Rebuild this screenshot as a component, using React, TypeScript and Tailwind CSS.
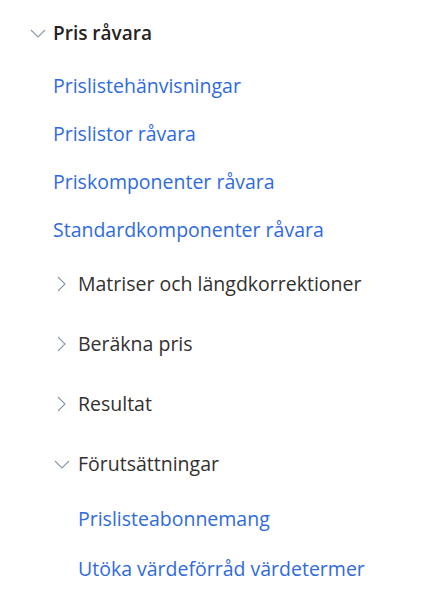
import React from "react";

const font = { fontFamily: '"Open Sans", "Noto Sans", sans-serif' };

function ChevronDown() {
  return (
    <svg width="16" height="9" viewBox="0 0 16 9" className="shrink-0">
      <path d="M1 1 L8 8 L15 1" fill="none" stroke="#8a97a8" strokeWidth="1.1" />
    </svg>
  );
}

function ChevronRight() {
  return (
    <svg width="9" height="16" viewBox="0 0 9 16" className="shrink-0">
      <path d="M1 1 L8 8 L1 15" fill="none" stroke="#8a97a8" strokeWidth="1.1" />
    </svg>
  );
}

export default function App() {
  return (
    <div className="h-[607px] w-[431px] bg-white pt-[13px]" style={font}>
      <div className="flex h-10 items-center pl-[30px]">
        <ChevronDown />
        <span className="ml-[7px] text-[19px] font-semibold leading-none text-[#252423]">Pris råvara</span>
      </div>
      <div className="pt-[9px]">
        <div className="flex h-12 items-center pl-[53px]">
          <span className="text-[19.5px] leading-none text-[#2f6bdc]">Prislistehänvisningar</span>
        </div>
        <div className="flex h-12 items-center pl-[53px]">
          <span className="text-[19.5px] leading-none text-[#2f6bdc]">Prislistor råvara</span>
        </div>
        <div className="flex h-12 items-center pl-[53px]">
          <span className="text-[19.5px] leading-none text-[#2f6bdc]">Priskomponenter råvara</span>
        </div>
        <div className="flex h-12 items-center pl-[53px]">
          <span className="text-[19.5px] leading-none text-[#2f6bdc]">Standardkomponenter råvara</span>
        </div>
      </div>
      <div className="flex h-[60px] items-center pl-[57px]">
        <ChevronRight />
        <span className="ml-[12px] text-[19.5px] leading-none text-[#323130]">Matriser och längdkorrektioner</span>
      </div>
      <div className="flex h-[60px] items-center pl-[57px]">
        <ChevronRight />
        <span className="ml-[12px] text-[19.5px] leading-none text-[#323130]">Beräkna pris</span>
      </div>
      <div className="flex h-[60px] items-center pl-[57px]">
        <ChevronRight />
        <span className="ml-[12px] text-[19.5px] leading-none text-[#323130]">Resultat</span>
      </div>
      <div className="flex h-[60px] items-center pl-[54px]">
        <ChevronDown />
        <span className="ml-[8px] text-[19.5px] leading-none text-[#323130]">Förutsättningar</span>
      </div>
      <div className="flex h-[50px] items-center pl-[78px]">
        <span className="text-[19.5px] leading-none text-[#2f6bdc]">Prislisteabonnemang</span>
      </div>
      <div className="flex h-[50px] items-center pl-[78px]">
        <span className="text-[19.5px] leading-none text-[#2f6bdc]">Utöka värdeförråd värdetermer</span>
      </div>
    </div>
  );
}
